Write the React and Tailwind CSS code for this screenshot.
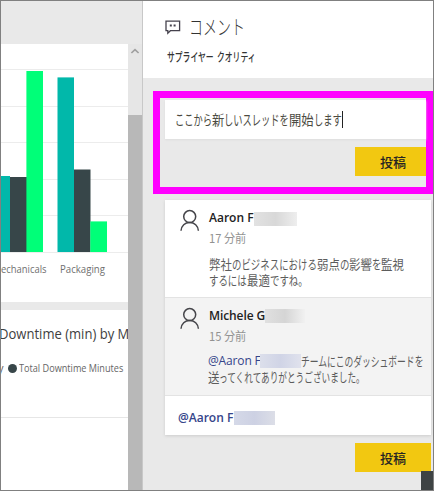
import React from "react";

const ui = "font-['Open_Sans','Noto_Sans_CJK_JP',sans-serif]";
const jp = "font-['Noto_Sans_CJK_JP',sans-serif]";

// Sets Japanese text in narrow UI proportions: kana are squeezed more than kanji.
function Narrow({ text, kana = 0.7, kanji = 0.88 }) {
  const runs = text.match(/[\u3001-\u30ff]+|[^\u3001-\u30ff]+/g);
  return (
    <span className="inline-flex">
      {runs.map((run, i) => {
        const k = /[\u3001-\u30ff]/.test(run) ? kana : kanji;
        return (
          <span key={i} className="inline-block shrink-0" style={{ width: `${run.length * k}em` }}>
            <span className="inline-block origin-left" style={{ width: `${run.length}em`, transform: `scaleX(${k})` }}>
              {run}
            </span>
          </span>
        );
      })}
    </span>
  );
}

function Blur({ className }) {
  return <span className={`shrink-0 h-[14px] ${className}`} />;
}

function Avatar() {
  return (
    <svg width="20" height="23" viewBox="0 0 20 23" className="shrink-0" fill="none" stroke="#45454a" strokeWidth="1.5">
      <circle cx="9.7" cy="7.6" r="6" />
      <path d="M1 21.8C1.3 16.6 5 13.5 9.7 13.5S18.1 16.6 18.4 21.8" />
    </svg>
  );
}

function PostButton({ className }) {
  return (
    <button className={`block h-[29px] bg-[#f2c811] pl-[25px] text-left text-[13px] leading-[27px] font-medium text-[#252423] ${className}`}>
      投稿
    </button>
  );
}

function Chart() {
  return (
    <svg width="127" height="258" viewBox="1 44 127 258" className="block font-['Open_Sans',sans-serif]">
      {[69, 106, 142, 179, 215, 252].map((y) => (
        <rect key={y} x="1" y={y} width="127" height="1" fill="#ececec" />
      ))}
      <rect x="1" y="176" width="9" height="76" fill="#01b8aa" />
      <rect x="10" y="177" width="17" height="75" fill="#374649" />
      <rect x="26.4" y="71" width="16.6" height="181" fill="#00ff78" />
      <rect x="57.5" y="77.4" width="16.5" height="174.6" fill="#01b8aa" />
      <rect x="74" y="169.5" width="16.5" height="82.5" fill="#374649" />
      <rect x="90.3" y="221.4" width="16.7" height="30.6" fill="#00ff78" />
      <text x="46.5" y="273" textAnchor="end" fontSize="11" fill="#707070" textLength="54" lengthAdjust="spacingAndGlyphs">Mechanicals</text>
      <text x="60" y="273" fontSize="11" fill="#707070" textLength="45" lengthAdjust="spacingAndGlyphs">Packaging</text>
    </svg>
  );
}

function Dashboard() {
  return (
    <div className="flex w-[142px] shrink-0 flex-col border-r border-[#c8c8c8] bg-[#e9e9e9]">
      <div className="h-[43px] shrink-0" />
      <div className="flex flex-1">
        <div className="flex w-[127px] flex-col overflow-hidden">
          <div className="h-[258px] shrink-0 bg-white">
            <Chart />
          </div>
          <div className="mt-[8px] flex-1 bg-white pt-[12px] whitespace-nowrap">
            <div className="ml-[-2px] h-[22px] w-max origin-left scale-x-[0.87] text-[15px] leading-[22px] text-[#404040]">
              Downtime (min) by M
            </div>
            <div className="mt-[15px] flex h-[18px] items-center text-[11px] leading-[18px] text-[#666]">
              <span className="-ml-[3px] w-[10px] shrink-0">y</span>
              <span className="h-[9px] w-[9px] shrink-0 rounded-full bg-[#374649]" />
              <span className="ml-[2px] w-max shrink-0 origin-left scale-x-[0.83]">Total Downtime Minutes</span>
            </div>
            <div className="mt-[40px] h-px bg-[#e6e6e6]" />
          </div>
        </div>
        <div className="flex w-[14px] flex-col bg-[#e6e6e6]">
          <svg width="14" height="71" viewBox="0 0 14 71" fill="none" stroke="#a0a0a0" strokeWidth="1.7">
            <path d="M3.4 9L7 5.6L10.6 9" />
          </svg>
          <div className="flex-1 bg-[#b8b8b8]" />
        </div>
      </div>
    </div>
  );
}

function Comments() {
  return (
    <div className={`flex w-[290px] shrink-0 flex-col bg-[#e9e9e9] ${jp} whitespace-nowrap`}>
      <div className="h-[77px] shrink-0 bg-white pt-[11px] pl-[22px]">
        <div className="flex h-[30px] items-center">
          <svg width="16" height="15" viewBox="0 0 16 15" fill="none" stroke="#45424d" strokeWidth="1.3">
            <path d="M1 1.1H14.6V10.7H5.4L2.8 13.2V10.7H1Z" />
            <path d="M4.8 5.4h2M8.6 5.4h2" strokeWidth="2" />
          </svg>
          <span className="ml-[8px] text-[20px] leading-[30px] font-light text-[#333]">
            <Narrow text="コメント" kana={0.7} />
          </span>
        </div>
        <div className="mt-[6px] ml-[2px] h-[18px] text-[12px] leading-[18px] font-medium text-[#333]">
          <Narrow text="サプライヤー" kana={0.65} /> <Narrow text="クオリティ" kana={0.65} />
        </div>
      </div>
      <div className="mt-[13px] ml-[10px] h-[103px] w-[280px] shrink-0 border-[7px] border-[#ff00ff] pt-[2px] pl-[5px]">
        <div className="flex h-[39px] items-center bg-white pl-[10px] shadow-[0_1px_2px_#ddd]">
          <span className="w-[167px] pb-[2px] text-[14px] leading-[20px] text-[#4c4b42]">
            <Narrow text="ここから新しいスレッドを開始します" kana={0.66} />
          </span>
          <span className="h-[17px] w-px bg-[#222]" />
        </div>
        <PostButton className="mt-[8px] ml-auto w-[71px]" />
      </div>
      <div className="mt-[6px] ml-[22px] h-[235px] w-[266px] shrink-0 bg-white shadow-[0_1px_3px_#ccc]">
        <div className="flex h-[97px] pt-[9px] pl-[15px]">
          <Avatar />
          <div className="ml-[9px]">
            <div className={`flex h-[18px] items-center text-[12px] leading-[18px] font-semibold text-[#222] ${ui}`}>
              <span className="w-[45px]">Aaron F</span>
              <Blur className="mt-[2px] w-[43px] bg-linear-to-r from-[#e2e2e2] via-[#d8d8d8] to-[#eeeeee]" />
            </div>
            <div className="mt-[2px] h-[18px] w-max origin-left scale-x-[0.93] text-[12px] leading-[18px] text-[#929292]">17 分前</div>
            <div className="mt-[9px] h-[32px] text-[13px] leading-[16px] text-[#5c5c5c]">
              <div><Narrow text="弊社のビジネスにおける弱点の影響を監視" kana={0.725} /></div>
              <div><Narrow text="するには最適ですね。" kana={0.725} /></div>
            </div>
          </div>
        </div>
        <div className="flex h-[99px] border-y border-[#e3e3e3] bg-[#f3f3f3] pt-[9px] pl-[15px]">
          <Avatar />
          <div className="ml-[9px]">
            <div className={`flex h-[18px] items-center text-[12px] leading-[18px] font-semibold text-[#222] ${ui}`}>
              <span className="w-[56px] tracking-[-0.1px]">Michele G</span>
              <Blur className="w-[40px] bg-linear-to-r from-[#e0e0e0] via-[#d5d5d5] to-[#f1f1f1]" />
            </div>
            <div className="mt-[2px] h-[18px] w-max origin-left scale-x-[0.93] text-[12px] leading-[18px] text-[#929292]">15 分前</div>
            <div className="mt-[8px] -ml-px h-[33px] text-[13px] leading-[16px] text-[#5c5c5c]">
              <div className="flex h-[16px] items-center">
                <span className={`w-[52px] text-[12px] tracking-[-0.15px] text-[#35458a] ${ui}`}>@Aaron F</span>
                <Blur className="w-[41px] bg-linear-to-r from-[#dcdfeb] via-[#d0d4e6] to-[#e0e2ed]" />
                <Narrow text="チームにこのダッシュボードを" kana={0.675} />
              </div>
              <div><Narrow text="送ってくれてありがとうございました。" kana={0.665} /></div>
            </div>
          </div>
        </div>
        <div className={`flex h-[39px] items-center pt-[5px] pl-[13px] text-[12px] font-semibold text-[#35458a] ${ui}`}>
          <span className="w-[56px]">@Aaron F</span>
          <Blur className="w-[41px] bg-linear-to-r from-[#d5d9e8] via-[#cdd1e3] to-[#dcdee7]" />
        </div>
      </div>
      <div className="mt-[8px] mr-[2px] shrink-0">
        <PostButton className="ml-auto w-[76px]" />
      </div>
      <div className="relative -mt-px ml-auto h-[19px] w-[12px] shrink-0 bg-[#3e4344]" />
    </div>
  );
}

export default function App() {
  return (
    <div className={`flex h-[491px] w-[434px] overflow-hidden border border-[#808080] ${ui}`}>
      <Dashboard />
      <Comments />
    </div>
  );
}
